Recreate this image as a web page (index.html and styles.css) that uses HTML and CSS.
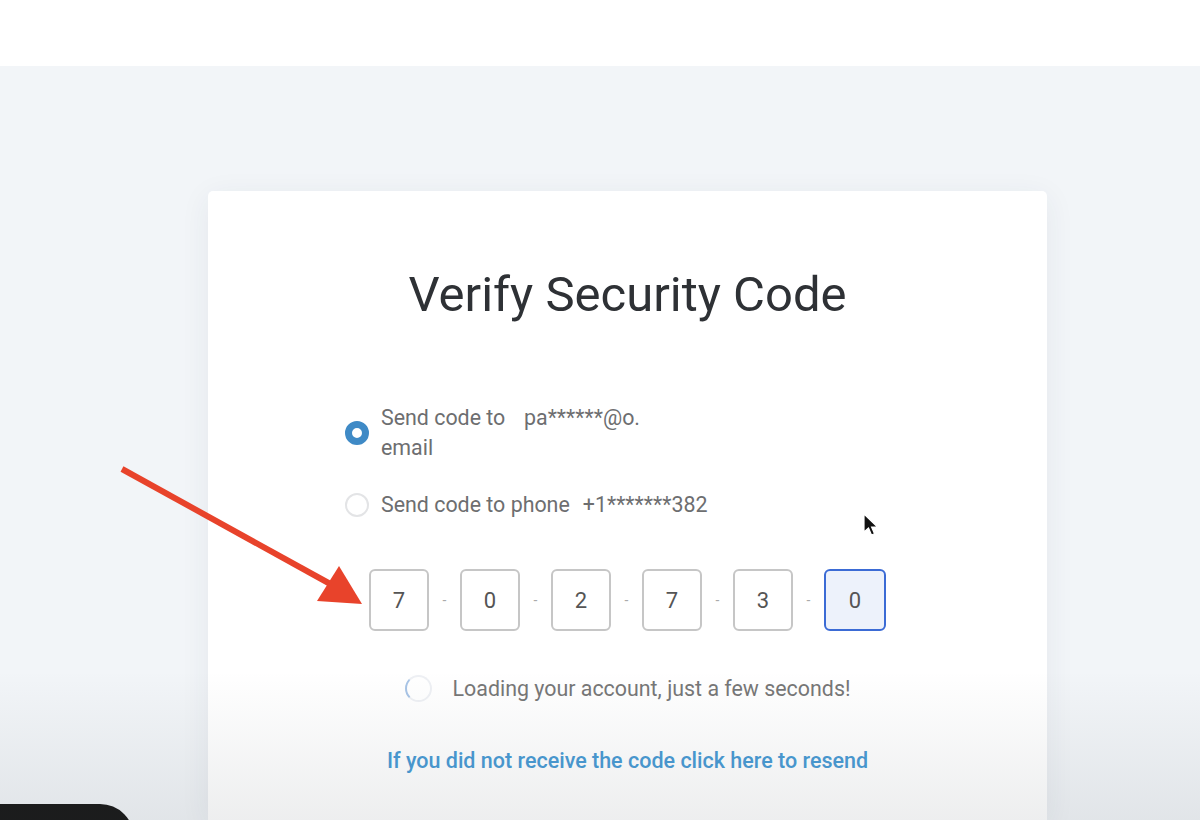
FILE: index.html
```html
<!DOCTYPE html>
<html lang="en">
<head>
    <meta charset="UTF-8">
    <meta name="viewport" content="width=device-width, initial-scale=1.0">
    <title>Verify Security Code</title>
    <link rel="stylesheet" href="styles.css">
</head>
<body>
    <div class="topbar"></div>

    <div class="page">
        <div class="card">
            <h1>Verify Security Code</h1>

            <div class="options">
                <label class="option">
                    <span class="radio checked"></span>
                    <span class="label narrow">Send code to email</span>
                    <span class="value">pa******@o.</span>
                </label>
                <label class="option">
                    <span class="radio"></span>
                    <span class="label">Send code to phone</span>
                    <span class="value">+1*******382</span>
                </label>
            </div>

            <div class="code-row">
                <div class="digit">7</div><span class="dash">-</span>
                <div class="digit">0</div><span class="dash">-</span>
                <div class="digit">2</div><span class="dash">-</span>
                <div class="digit">7</div><span class="dash">-</span>
                <div class="digit">3</div><span class="dash">-</span>
                <div class="digit active">0</div>
            </div>

            <div class="loading">
                <span class="spinner"></span>
                <span>Loading your account, just a few seconds!</span>
            </div>

            <a class="resend" href="#">If you did not receive the code click here to resend</a>
        </div>
    </div>

    <!-- annotation + recording overlays -->
    <svg class="arrow" width="380" height="640" viewBox="0 0 380 640">
        <line x1="122" y1="469" x2="334" y2="586" stroke="#e8432b" stroke-width="6" />
        <polygon points="317,601 339,566 362,604" fill="#e8432b" />
    </svg>

    <svg class="cursor" width="20" height="26" viewBox="0 0 20 26">
        <path d="M2 1 L2 19 L6.5 15 L9.5 22 L12.5 20.7 L9.6 14 L15.5 14 Z" fill="#111" stroke="#fff" stroke-width="1.2" />
    </svg>

    <div class="pill"></div>
    <div class="vignette"></div>
</body>
</html>
```

FILE: styles.css
```css
body {
    margin: 0;
    font-family: Roboto, 'Liberation Sans', sans-serif;
    background-color: #f2f5f8;
    height: 820px;
    overflow: hidden;
    position: relative;
}

.topbar {
    height: 66px;
    background-color: #fff;
}

.page {
    padding: 125px 0 0 208px;
}

.card {
    width: 839px;
    height: 629px;
    background-color: #fff;
    border-radius: 5px 5px 0 0;
    box-shadow: 0 6px 30px rgba(40, 60, 90, 0.07);
    display: flex;
    flex-direction: column;
    align-items: center;
    padding-top: 74px;
    box-sizing: border-box;
}

h1 {
    margin: 0;
    font-size: 49px;
    font-weight: 400;
    color: #2e3135;
    line-height: 60px;
}

.options {
    align-self: flex-start;
    margin: 78px 0 0 137px;
    display: flex;
    flex-direction: column;
    gap: 27px;
}

.option {
    display: flex;
    align-items: center;
    font-size: 21.4px;
    line-height: 30px;
    color: #6d6e70;
}

.radio {
    width: 20px;
    height: 20px;
    border-radius: 50%;
    border: 2px solid #e3e4e6;
    margin-right: 12px;
    flex-shrink: 0;
}

.radio.checked {
    border: 7px solid #3f8ac6;
    width: 10px;
    height: 10px;
    background-color: #fff;
}

.option .label.narrow {
    width: 132px;
}

.option .value {
    margin-left: 11px;
}

.option:first-child .value {
    align-self: flex-start;
}

.option:last-child .value {
    margin-left: 13px;
}

.code-row {
    margin-top: 49px;
    display: flex;
    align-items: center;
}

.digit {
    width: 56px;
    height: 58px;
    border: 2px solid #c6c6c6;
    border-radius: 6px;
    display: flex;
    align-items: center;
    justify-content: center;
    font-size: 22px;
    color: #555;
}

.digit.active {
    border-color: #3b6bd5;
    background-color: #edf2fb;
    width: 58px;
}

.dash {
    width: 31px;
    text-align: center;
    color: #aaa;
    font-size: 14px;
}

.loading {
    margin-top: 44px;
    display: flex;
    align-items: center;
    gap: 21px;
    font-size: 21.4px;
    color: #777;
}

.spinner {
    width: 23px;
    height: 23px;
    border-radius: 50%;
    border: 2px solid #eef0f4;
    border-left-color: #a8c4e6;
}

.resend {
    margin-top: 46px;
    font-size: 21.5px;
    font-weight: 500;
    color: #4a9bd4;
    text-decoration: none;
}

.arrow {
    position: absolute;
    left: 0;
    top: 0;
}

.cursor {
    position: absolute;
    left: 862px;
    top: 513px;
}

.pill {
    position: absolute;
    left: 0;
    top: 804px;
    width: 134px;
    height: 40px;
    background-color: #1b1b1b;
    border-top-right-radius: 34px;
}

.vignette {
    position: absolute;
    left: 0;
    right: 0;
    bottom: 0;
    height: 150px;
    background: linear-gradient(rgba(0, 0, 0, 0), rgba(30, 40, 50, 0.08));
    pointer-events: none;
}
```
